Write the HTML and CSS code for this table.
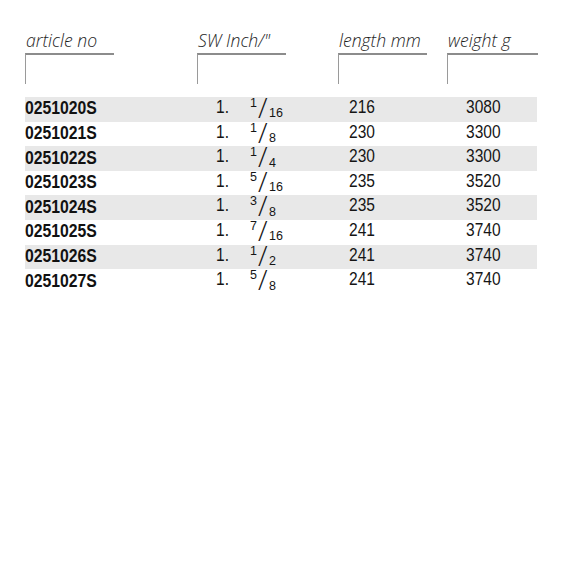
FILE: index.html
```html
<!DOCTYPE html>
<html>
<head>
<meta charset="utf-8">
<link rel="stylesheet" href="styles.css">
</head>
<body>
<div class="sheet">
  <div class="head">
    <div class="hcell"><div class="label">article no</div><div class="box"></div></div>
    <div class="hcell"><div class="label">SW Inch/"</div><div class="box"></div></div>
    <div class="hcell"><div class="label">length mm</div><div class="box"></div></div>
    <div class="hcell"><div class="label">weight g</div><div class="box wide"></div></div>
  </div>
  <div class="rows">
    <div class="row"><span class="art"><span class="sq">0251020S</span></span><span class="one"><span class="nq">1.</span></span><span class="frac"><span class="num">1</span><span class="sl">/</span><span class="den">16</span></span><span class="len"><span class="nq">216</span></span><span class="wt"><span class="nq">3080</span></span></div>
    <div class="row"><span class="art"><span class="sq">0251021S</span></span><span class="one"><span class="nq">1.</span></span><span class="frac"><span class="num">1</span><span class="sl">/</span><span class="den">8</span></span><span class="len"><span class="nq">230</span></span><span class="wt"><span class="nq">3300</span></span></div>
    <div class="row"><span class="art"><span class="sq">0251022S</span></span><span class="one"><span class="nq">1.</span></span><span class="frac"><span class="num">1</span><span class="sl">/</span><span class="den">4</span></span><span class="len"><span class="nq">230</span></span><span class="wt"><span class="nq">3300</span></span></div>
    <div class="row"><span class="art"><span class="sq">0251023S</span></span><span class="one"><span class="nq">1.</span></span><span class="frac"><span class="num">5</span><span class="sl">/</span><span class="den">16</span></span><span class="len"><span class="nq">235</span></span><span class="wt"><span class="nq">3520</span></span></div>
    <div class="row"><span class="art"><span class="sq">0251024S</span></span><span class="one"><span class="nq">1.</span></span><span class="frac"><span class="num">3</span><span class="sl">/</span><span class="den">8</span></span><span class="len"><span class="nq">235</span></span><span class="wt"><span class="nq">3520</span></span></div>
    <div class="row"><span class="art"><span class="sq">0251025S</span></span><span class="one"><span class="nq">1.</span></span><span class="frac"><span class="num">7</span><span class="sl">/</span><span class="den">16</span></span><span class="len"><span class="nq">241</span></span><span class="wt"><span class="nq">3740</span></span></div>
    <div class="row"><span class="art"><span class="sq">0251026S</span></span><span class="one"><span class="nq">1.</span></span><span class="frac"><span class="num">1</span><span class="sl">/</span><span class="den">2</span></span><span class="len"><span class="nq">241</span></span><span class="wt"><span class="nq">3740</span></span></div>
    <div class="row"><span class="art"><span class="sq">0251027S</span></span><span class="one"><span class="nq">1.</span></span><span class="frac"><span class="num">5</span><span class="sl">/</span><span class="den">8</span></span><span class="len"><span class="nq">241</span></span><span class="wt"><span class="nq">3740</span></span></div>
  </div>
</div>
</body>
</html>
```
FILE: styles.css
```css
html, body {
  margin: 0;
  padding: 0;
  background: #ffffff;
}
.sheet {
  padding-top: 30px;
  margin-left: 25px;
  width: 512px;
}
.head {
  display: grid;
  grid-template-columns: 172px 141px 109px 90px;
}
.label {
  font-family: "Open Sans", "Liberation Sans", sans-serif;
  font-style: italic;
  font-weight: 300;
  font-size: 17.6px;
  line-height: 20px;
  color: #1e1e1e;
  padding-left: 1px;
}
.box {
  margin-top: 3px;
  width: 88px;
  height: 29px;
  border-top: 2px solid #8c8c8c;
  border-left: 1px solid #9a9a9a;
}
.box.wide {
  width: 90px;
}
.rows {
  margin-top: 13px;
}
.row {
  display: flex;
  align-items: flex-start;
  height: 24.6px;
  font-family: "Liberation Sans", Arial, sans-serif;
  color: #151515;
}
.row:nth-child(odd) {
  background: #e8e8e8;
}
.art {
  width: 191px;
  font-weight: bold;
  font-size: 17.5px;
  line-height: 20px;
  padding-top: 1.4px;
  color: #111111;
}
.sq {
  display: inline-block;
  transform: scaleX(0.9);
  transform-origin: 0 50%;
}
.one, .len, .wt {
  font-size: 18.5px;
  line-height: 20px;
}
.nq {
  display: inline-block;
  transform: scaleX(0.84);
  transform-origin: 0 50%;
}
.one {
  width: 34px;
}
.frac {
  display: flex;
  align-items: flex-start;
  width: 99px;
}
.num {
  font-size: 12.5px;
  line-height: 12.5px;
}
.sl {
  font-family: "Open Sans", "Liberation Sans", sans-serif;
  font-weight: 300;
  font-size: 28px;
  line-height: 20px;
  margin-left: 1px;
}
.den {
  font-size: 12.5px;
  line-height: 12.5px;
  margin-top: 10.4px;
  margin-left: 1.5px;
}
.len {
  width: 117px;
}
.wt {
  flex: 1;
}
```
